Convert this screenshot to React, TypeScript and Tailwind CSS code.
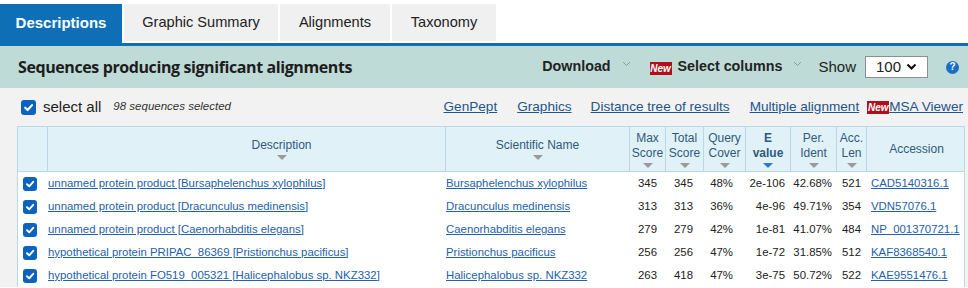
import React from "react";

type Row = {
  desc: string;
  sci: string;
  max: string;
  total: string;
  cover: string;
  e: string;
  ident: string;
  len: string;
  acc: string;
};

const rows: Row[] = [
  { desc: "unnamed protein product [Bursaphelenchus xylophilus]", sci: "Bursaphelenchus xylophilus", max: "345", total: "345", cover: "48%", e: "2e-106", ident: "42.68%", len: "521", acc: "CAD5140316.1" },
  { desc: "unnamed protein product [Dracunculus medinensis]", sci: "Dracunculus medinensis", max: "313", total: "313", cover: "36%", e: "4e-96", ident: "49.71%", len: "354", acc: "VDN57076.1" },
  { desc: "unnamed protein product [Caenorhabditis elegans]", sci: "Caenorhabditis elegans", max: "279", total: "279", cover: "42%", e: "1e-81", ident: "41.07%", len: "484", acc: "NP_001370721.1" },
  { desc: "hypothetical protein PRIPAC_86369 [Pristionchus pacificus]", sci: "Pristionchus pacificus", max: "256", total: "256", cover: "47%", e: "1e-72", ident: "31.85%", len: "512", acc: "KAF8368540.1" },
  { desc: "hypothetical protein FO519_005321 [Halicephalobus sp. NKZ332]", sci: "Halicephalobus sp. NKZ332", max: "263", total: "418", cover: "47%", e: "3e-75", ident: "50.72%", len: "522", acc: "KAE9551476.1" },
];

const cols = "grid grid-cols-[29px_398px_184px_36px_38px_42px_45px_46px_30px_100px]";

const Check = ({ size = 14 }: { size?: number }) => (
  <span
    className="flex items-center justify-center rounded-[3px] bg-[#0b63bf]"
    style={{ width: size, height: size }}
  >
    <svg width={size - 4} height={size - 4} viewBox="0 0 10 10">
      <path d="M2 5.2 L4.2 7.3 L8.2 2.8" fill="none" stroke="white" strokeWidth="1.9" strokeLinecap="round" strokeLinejoin="round" />
    </svg>
  </span>
);

const NewBadge = () => (
  <span className="inline-flex h-[13px] w-[22px] items-center justify-center bg-[#b0101a] text-[10px] font-bold italic leading-none text-white">
    New
  </span>
);

const Caret = () => (
  <svg width="9" height="6" viewBox="0 0 9 6" className="ml-[11px] mt-[-6px]">
    <polyline points="1,1 4.5,4.5 8,1" fill="none" stroke="#8a9a99" strokeWidth="1" />
  </svg>
);

const SortArrow = ({ active = false }: { active?: boolean }) => (
  <svg width="10" height="5" viewBox="0 0 10 5" className="mx-auto mt-[2px]">
    <polygon points="0,0 10,0 5,5" fill={active ? "#2a78cf" : "#9a9a9a"} />
  </svg>
);

const Th = ({ lines, arrow = true, active = false, bold = false, pad = "" }: { lines: string[]; arrow?: boolean; active?: boolean; bold?: boolean; pad?: string }) => (
  <div className={`flex flex-col items-center justify-center border-l border-[#b8d8e6] text-center leading-[15px] ${pad}`}>
    {lines.map((l) => (
      <span key={l} className={bold ? "font-bold" : ""}>
        {l}
      </span>
    ))}
    {arrow && <SortArrow active={active} />}
  </div>
);

const tabs = [
  { label: "Descriptions", w: "w-[122px]", active: true },
  { label: "Graphic Summary", w: "w-[154px]" },
  { label: "Alignments", w: "w-[110px]" },
  { label: "Taxonomy", w: "w-[104px]" },
];

export default function App() {
  return (
    <div className="h-[288px] w-[968px] overflow-hidden bg-white font-['Liberation_Sans',Arial,sans-serif] text-[#222]">
      {/* tabs */}
      <div className="flex gap-[2px] pt-[4px]">
        {tabs.map((t) => (
          <div
            key={t.label}
            className={
              t.active
                ? `${t.w} flex h-[39px] items-center justify-center bg-[#0e6fb7] text-[15px] font-bold text-white`
                : `${t.w} flex h-[37px] items-center justify-center bg-[#f0f0f0] text-[14.6px] text-[#222]`
            }
          >
            {t.label}
          </div>
        ))}
      </div>
      <div className="h-[3px] bg-[#0e6fb7]" />

      {/* teal header */}
      <div className="flex h-[42px] items-center bg-[#bfdbd7] pl-[18px] pr-[9px]">
        <h2 className="font-['Open_Sans',sans-serif] text-[16px] font-bold tracking-[-0.4px] text-[#1d1d1d]">
          Sequences producing significant alignments
        </h2>
        <div className="ml-auto flex items-center text-[15px] text-[#222]">
          <span className="text-[14.3px] font-bold">Download</span>
          <Caret />
          <span className="ml-[19px] mr-[6px]">
            <NewBadge />
          </span>
          <span className="text-[14.3px] font-bold">Select columns</span>
          <Caret />
          <span className="ml-[16px]">Show</span>
          <div className="ml-[9px] flex h-[22px] w-[63px] items-center border border-[#8f8f8f] bg-white pl-[10px] text-[15px]">
            100
            <svg width="11" height="8" viewBox="0 0 11 8" className="ml-[5px]">
              <polyline points="1.5,1.5 5.5,5.5 9.5,1.5" fill="none" stroke="#111" strokeWidth="2.2" />
            </svg>
          </div>
          <span className="ml-[18px] flex h-[13px] w-[13px] items-center justify-center rounded-full bg-[#1a6fc4] text-[10px] font-bold leading-none text-white">
            ?
          </span>
        </div>
      </div>

      {/* gray area */}
      <div className="bg-[#f2f2f2] pl-[17px] pr-[5px]">
        <div className="flex h-[38px] items-center">
          <span className="ml-[4px]">
            <Check size={15} />
          </span>
          <span className="ml-[7px] text-[15px]">select all</span>
          <span className="ml-[12px] text-[11.5px] italic text-[#333]">98 sequences selected</span>
          <div className="ml-auto flex items-center text-[13.6px] text-[#23558a] underline">
            <span>GenPept</span>
            <span className="ml-[20px]">Graphics</span>
            <span className="ml-[19px]">Distance tree of results</span>
            <span className="ml-[20px]">Multiple alignment</span>
            <span className="ml-[8px] no-underline">
              <NewBadge />
            </span>
            <span>MSA Viewer</span>
          </div>
        </div>

        {/* table */}
        <div className="w-[948px] border-x border-[#b8d8e6] bg-white text-[12px]">
          <div className={`${cols} h-[46px] border-y border-[#b8d8e6] bg-[#e1f1f8] text-[#2f5b7b]`}>
            <div />
            <Th lines={["Description"]} pad="pl-[70px]" />
            <Th lines={["Scientific Name"]} />
            <Th lines={["Max", "Score"]} />
            <Th lines={["Total", "Score"]} />
            <Th lines={["Query", "Cover"]} />
            <Th lines={["E", "value"]} active bold />
            <Th lines={["Per.", "Ident"]} />
            <Th lines={["Acc.", "Len"]} />
            <Th lines={["Accession"]} arrow={false} />
          </div>
          {rows.map((r) => (
            <div key={r.acc} className={`${cols} h-[23px] items-center text-[11.4px] text-[#222]`}>
              <div className="flex pl-[5px]">
                <Check />
              </div>
              <span className="truncate pl-[1px] text-[#2461a8] underline">{r.desc}</span>
              <span className="pl-[1px] text-[#2461a8] underline">{r.sci}</span>
              <span className="pr-[8px] text-right">{r.max}</span>
              <span className="pr-[10px] text-right">{r.total}</span>
              <span className="pr-[12px] text-right">{r.cover}</span>
              <span className="pr-[5px] text-right">{r.e}</span>
              <span className="pr-[4px] text-right">{r.ident}</span>
              <span className="pr-[5px] text-right">{r.len}</span>
              <span className="pl-[5px] text-[#2461a8] underline">{r.acc}</span>
            </div>
          ))}
        </div>
      </div>
    </div>
  );
}
